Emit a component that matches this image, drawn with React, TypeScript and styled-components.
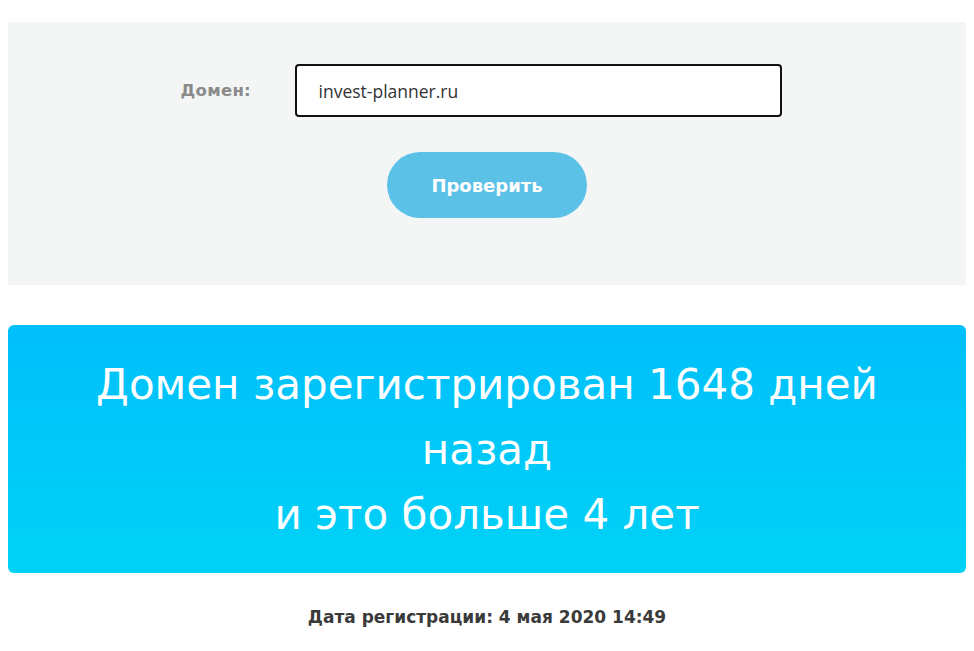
import React from 'react';
import styled, {createGlobalStyle} from "styled-components";

const GlobalStyle = createGlobalStyle`
  body {
    margin: 0;
    padding: 22px 8px 0;
    background: #fff;
    font-family: "Open Sans", "DejaVu Sans", sans-serif;
  }
`

function App() {
    return (
        <>
            <GlobalStyle/>
            <Page>
                <CheckForm>
                    <FieldRow>
                        <Label htmlFor="domain">Домен:</Label>
                        <Input id="domain" defaultValue="invest-planner.ru"/>
                    </FieldRow>
                    <CheckButton type="button">Проверить</CheckButton>
                </CheckForm>

                <ResultCard>
                    <ResultText>
                        Домен зарегистрирован 1648 дней назад
                        <br/>
                        и это больше 4 лет
                    </ResultText>
                </ResultCard>

                <RegDate>Дата регистрации: 4 мая 2020 14:49</RegDate>
            </Page>
        </>
    );
}

export default App;

const Page = styled.div`
  display: flex;
  flex-direction: column;
  width: 958px;
`
const CheckForm = styled.form`
  background-color: #f4f5f5;
  height: 263px;
  box-sizing: border-box;
  padding-top: 42px;
  display: flex;
  flex-direction: column;
  align-items: center;
  gap: 35px;
`
const FieldRow = styled.div`
  display: flex;
  align-items: center;
  margin-left: -12px;
`
const Label = styled.label`
  width: 114px;
  color: #8a8a8a;
  font-family: "DejaVu Sans", sans-serif;
  font-size: 16.5px;
  font-weight: 700;
  letter-spacing: 0.3px;
`
const Input = styled.input`
  width: 487px;
  height: 53px;
  box-sizing: border-box;
  border: 2px solid #111;
  border-radius: 4px;
  background: #fff;
  padding: 0 22px;
  font-family: "Open Sans", sans-serif;
  font-size: 17.5px;
  color: #333;
  outline: none;
`
const CheckButton = styled.button`
  width: 200px;
  height: 66px;
  border: none;
  border-radius: 33px;
  background-color: #5bc1e7;
  color: #fff;
  font-family: "DejaVu Sans", sans-serif;
  font-size: 18px;
  font-weight: 700;
  cursor: pointer;
`
const ResultCard = styled.div`
  margin-top: 40px;
  height: 248px;
  box-sizing: border-box;
  border-radius: 6px;
  background: linear-gradient(180deg, #00bffb 0%, #00d2f6 100%);
  display: flex;
  align-items: center;
  justify-content: center;
  padding: 0 60px;
`
const ResultText = styled.div`
  color: #fff;
  text-align: center;
  font-family: "DejaVu Sans", sans-serif;
  font-size: 42px;
  line-height: 65px;
  font-weight: 400;
`
const RegDate = styled.div`
  margin-top: 34px;
  text-align: center;
  color: #3a3a3a;
  font-family: "DejaVu Sans", sans-serif;
  font-size: 17px;
  font-weight: 700;
`
